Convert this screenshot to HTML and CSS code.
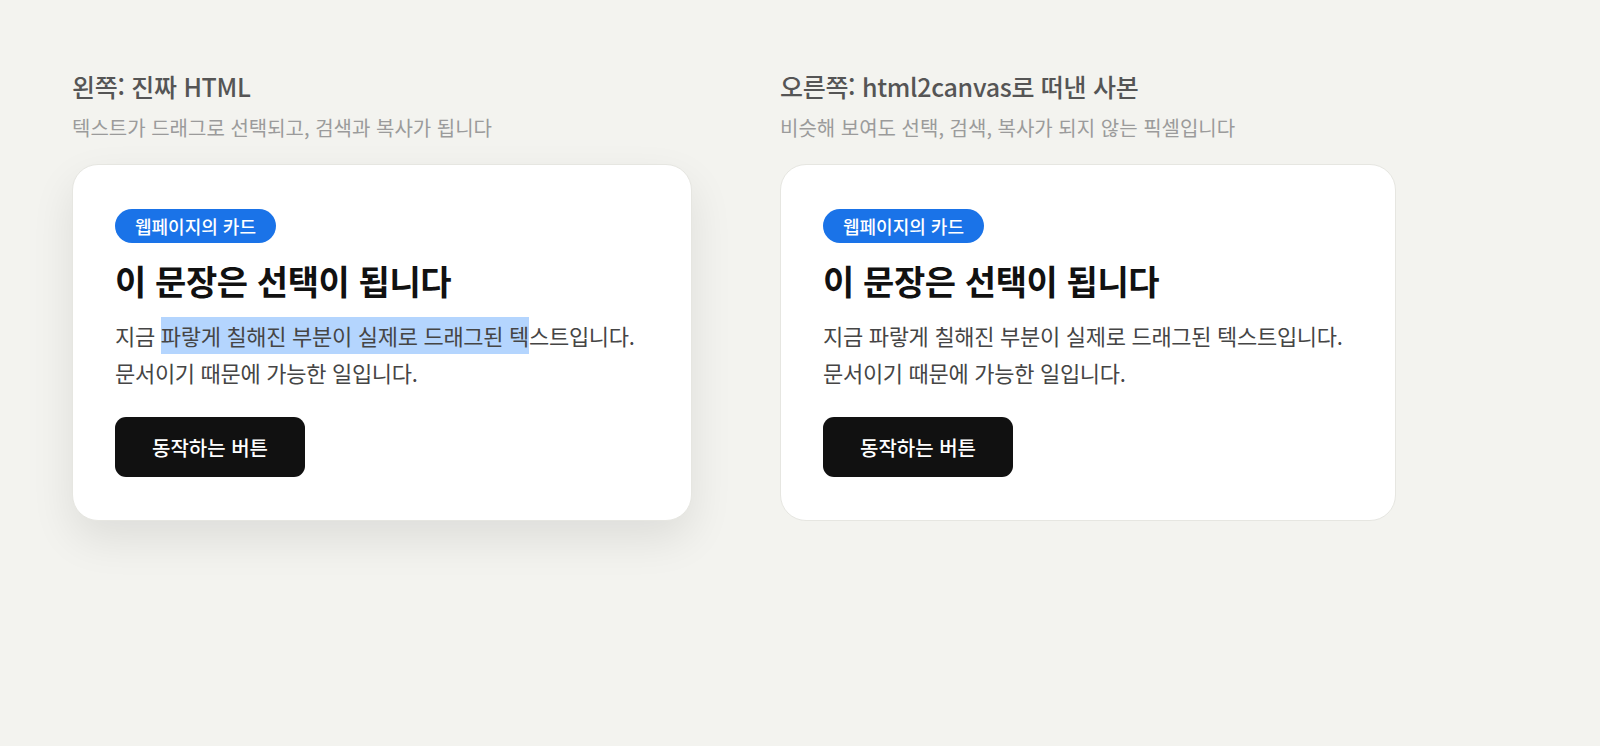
FILE: index.html
```html
<!DOCTYPE html>
<html lang="ko">

<head>
  <meta charset="UTF-8">
  <meta name="viewport" content="width=device-width, initial-scale=1.0">
  <title>진짜 HTML vs html2canvas</title>

  <link rel="stylesheet" href="styles.css">
</head>

<body>
  <div class="compare">
    <section class="compare__col">
      <h2 class="compare__title">왼쪽: 진짜 HTML</h2>
      <p class="compare__desc">텍스트가 드래그로 선택되고, 검색과 복사가 됩니다</p>

      <div class="card card--live">
        <span class="card__badge">웹페이지의 카드</span>
        <h3 class="card__heading">이 문장은 선택이 됩니다</h3>
        <p class="card__text">지금 <span class="card__selected">파랗게 칠해진 부분이 실제로 드래그된 텍</span>스트입니다.<br>문서이기 때문에 가능한 일입니다.</p>
        <button class="card__button" type="button">동작하는 버튼</button>
      </div>
    </section>

    <section class="compare__col">
      <h2 class="compare__title">오른쪽: html2canvas로 떠낸 사본</h2>
      <p class="compare__desc">비슷해 보여도 선택, 검색, 복사가 되지 않는 픽셀입니다</p>

      <div class="card card--copy">
        <span class="card__badge">웹페이지의 카드</span>
        <h3 class="card__heading">이 문장은 선택이 됩니다</h3>
        <p class="card__text">지금 파랗게 칠해진 부분이 실제로 드래그된 텍스트입니다.<br>문서이기 때문에 가능한 일입니다.</p>
        <button class="card__button" type="button">동작하는 버튼</button>
      </div>
    </section>
  </div>
</body>

</html>
```

FILE: styles.css
```css
body {
  margin: 0;
  background: #f3f3ef;
  font-family: "Noto Sans CJK KR", "Noto Sans", sans-serif;
  color: #111;
}

.compare {
  display: grid;
  grid-template-columns: 620px 616px;
  column-gap: 88px;
  padding: 71px 72px;
}

.compare__title {
  margin: 0;
  font-size: 25px;
  line-height: 30px;
  font-weight: 500;
  color: #555;
  letter-spacing: -0.3px;
}

.compare__desc {
  margin: 15px 0 24px;
  font-size: 20px;
  line-height: 24px;
  color: #9b9b9b;
}

.card {
  display: flex;
  flex-direction: column;
  align-items: flex-start;
  padding: 44px 42px 43px;
  background: #fff;
  border: 1px solid #e6e6e1;
  border-radius: 26px;
}

.card--live {
  box-shadow: 0 18px 44px rgba(0, 0, 0, .09);
}

.card__badge {
  padding: 6px 20px;
  font-size: 18px;
  line-height: 22px;
  font-weight: 500;
  color: #fff;
  background: #1a73e8;
  border-radius: 999px;
}

.card__heading {
  margin: 17px 0 0;
  font-size: 34px;
  line-height: 42px;
  font-weight: 700;
  letter-spacing: -0.4px;
}

.card__text {
  margin: 15px 0 0;
  font-size: 22px;
  line-height: 37px;
  color: #454545;
  letter-spacing: -0.3px;
}

.card__selected {
  display: inline-block;
  background: #b4d5fe;
}

.card__button {
  margin-top: 26px;
  height: 60px;
  padding: 0 37px;
  font-family: inherit;
  font-size: 20px;
  font-weight: 500;
  color: #fff;
  background: #111;
  border: 0;
  border-radius: 11px;
  cursor: pointer;
}
```
